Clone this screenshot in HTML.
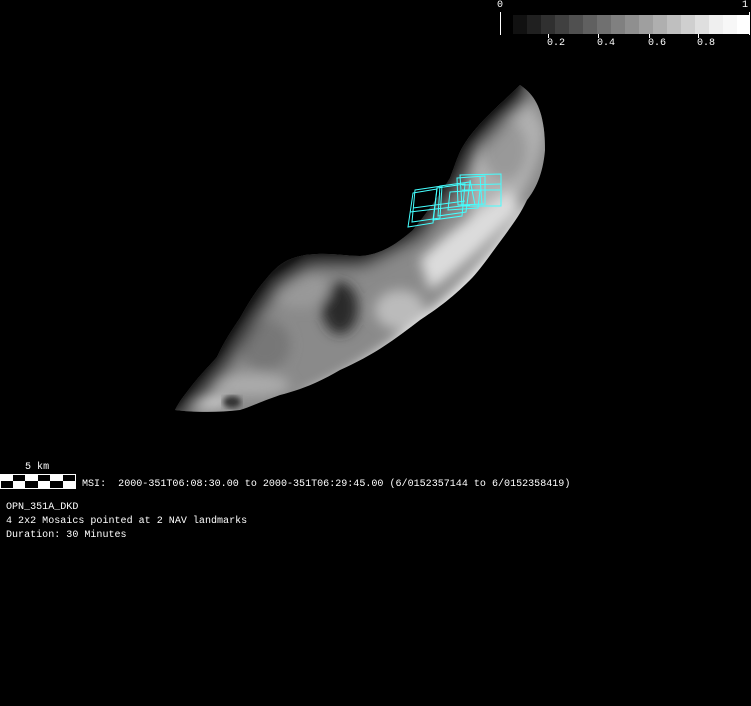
<!DOCTYPE html>
<html><head><meta charset="utf-8"><style>
html,body{margin:0;padding:0;background:#000;}
body{width:751px;height:706px;position:relative;overflow:hidden;font-family:"Liberation Mono","DejaVu Sans Mono",monospace;color:#fff;}
.t{position:absolute;font-size:10.05px;line-height:12px;white-space:pre;}
</style></head><body>
<svg width="751" height="706" style="position:absolute;left:0;top:0">
<defs>
<clipPath id="c"><path id="ast" d="M520,85 C535,95 545,110 545,150 C543,175 535,190 527,200 C520,215 512,225 505,235 C490,255 480,270 470,280 C450,300 435,310 420,320 C400,335 380,352 340,370 C320,382 300,390 280,395 C260,402 250,407 240,410 C215,413 190,412 175,410 C180,400 185,395 190,388 C200,375 210,365 217,357 C225,340 232,330 240,318 C250,300 258,288 267,278 C280,262 290,258 305,255 C330,252 345,256 360,256 C375,255 390,250 413,230 C425,215 440,195 450,178 C455,165 458,155 462,148 C475,125 500,105 520,85 Z"/></clipPath>
<filter id="b"><feGaussianBlur stdDeviation="6"/></filter>
<filter id="b3"><feGaussianBlur stdDeviation="3"/></filter>
<filter id="b8"><feGaussianBlur stdDeviation="9"/></filter>
</defs>
<g clip-path="url(#c)">
<rect x="150" y="60" width="420" height="370" fill="#8a8a8a"/>
<g filter="url(#b)">
<path d="M470,140 C490,120 510,100 525,90 L545,130 C540,170 520,200 500,230 L470,230 Z" fill="#b0b0b0"/>
<path d="M300,395 C380,360 450,300 500,240 L530,205 L545,215 L500,270 C450,320 400,360 320,400 Z" fill="#f0f0f0"/>
<path d="M420,260 C450,230 480,210 510,190 L520,210 C490,240 460,270 430,290 Z" fill="#dcdcdc"/>
<ellipse cx="340" cy="308" rx="18" ry="26" fill="#2a2a2a"/>
<ellipse cx="300" cy="290" rx="30" ry="18" fill="#999"/>
<ellipse cx="265" cy="345" rx="25" ry="25" fill="#777"/>
<ellipse cx="250" cy="385" rx="40" ry="12" fill="#aaa"/>
<ellipse cx="205" cy="402" rx="25" ry="7" fill="#ccc"/>
<ellipse cx="400" cy="310" rx="25" ry="20" fill="#bbb"/>
<ellipse cx="505" cy="150" rx="22" ry="30" fill="#999"/>
</g>
<path filter="url(#b8)" fill="none" stroke="#000" stroke-opacity="0.85" stroke-width="26" d="M165,415 L190,385 L215,355 L240,315 L267,275 L305,250 L360,250 L410,225 L445,178 L460,145 L490,112 L522,82"/>
<path filter="url(#b3)" fill="none" stroke="#000" stroke-opacity="0.6" stroke-width="6" d="M165,415 L190,385 L215,355 L240,315 L267,275 L305,250 L360,250 L410,225 L445,178 L460,145 L490,112 L522,82"/>
<ellipse cx="232" cy="402" rx="9" ry="6" fill="#333" filter="url(#b3)"/>
</g>
<g fill="none" stroke="#4ff" stroke-width="1">
<path d="M413,193 L437,189 L433,223 L408,227 Z"/>
<path d="M415,190 L442,186 L440,218 L412,222 Z"/>
<path d="M437,188 L465,184 L462,216 L433,220 Z"/>
<path d="M440,186 L470,182 L466,212 L438,216 Z"/>
<path d="M413,208 L465,201"/>
<path d="M410,212 L470,205"/>
<path d="M460,175 L501,174 L501,206 L462,206 Z"/>
<path d="M457,178 L485,176 L485,204 L458,205 Z"/>
<path d="M462,185 L501,184"/>
<path d="M462,190 L500,190"/>
<path d="M470,180 L475,205"/>
<path d="M480,176 L482,205"/>
<path d="M450,192 L480,190 L478,208 L448,210 Z"/>
</g>
<g>
<rect x="513" y="15" width="14" height="19" fill="#111"/>
<rect x="527" y="15" width="14" height="19" fill="#202020"/>
<rect x="541" y="15" width="14" height="19" fill="#303030"/>
<rect x="555" y="15" width="14" height="19" fill="#404040"/>
<rect x="569" y="15" width="14" height="19" fill="#505050"/>
<rect x="583" y="15" width="14" height="19" fill="#606060"/>
<rect x="597" y="15" width="14" height="19" fill="#707070"/>
<rect x="611" y="15" width="14" height="19" fill="#808080"/>
<rect x="625" y="15" width="14" height="19" fill="#8f8f8f"/>
<rect x="639" y="15" width="14" height="19" fill="#9f9f9f"/>
<rect x="653" y="15" width="14" height="19" fill="#afafaf"/>
<rect x="667" y="15" width="14" height="19" fill="#bfbfbf"/>
<rect x="681" y="15" width="14" height="19" fill="#cfcfcf"/>
<rect x="695" y="15" width="14" height="19" fill="#dfdfdf"/>
<rect x="709" y="15" width="14" height="19" fill="#efefef"/>
<rect x="723" y="15" width="14" height="19" fill="#f7f7f7"/>
<rect x="737" y="15" width="13" height="19" fill="#fff"/>
<rect x="500" y="12" width="1" height="23" fill="#fff"/>
<rect x="749" y="12" width="1" height="23" fill="#fff"/>
<rect x="548" y="34" width="1" height="4" fill="#fff"/>
<rect x="598" y="34" width="1" height="4" fill="#fff"/>
<rect x="649" y="34" width="1" height="4" fill="#fff"/>
<rect x="698" y="34" width="1" height="4" fill="#fff"/>
</g>
<rect x="0.5" y="474.5" width="75" height="14" fill="#fff" stroke="#fff"/>
<g fill="#000">
<rect x="13" y="475" width="12" height="6"/>
<rect x="38" y="475" width="12" height="6"/>
<rect x="63" y="475" width="12" height="6"/>
<rect x="1" y="481" width="12" height="7"/>
<rect x="25" y="481" width="13" height="7"/>
<rect x="50" y="481" width="13" height="7"/>
</g>
</svg>
<div class="t" style="left:497px;top:0px">0</div>
<div class="t" style="left:742px;top:0px">1</div>
<div class="t" style="left:547px;top:38px">0.2</div>
<div class="t" style="left:597px;top:38px">0.4</div>
<div class="t" style="left:648px;top:38px">0.6</div>
<div class="t" style="left:697px;top:38px">0.8</div>
<div class="t" style="left:25px;top:462px">5 km</div>
<div class="t" style="left:82px;top:479px">MSI:  2000-351T06:08:30.00 to 2000-351T06:29:45.00 (6/0152357144 to 6/0152358419)</div>
<div class="t" style="left:6px;top:502px">OPN_351A_DKD</div>
<div class="t" style="left:6px;top:516px">4 2x2 Mosaics pointed at 2 NAV landmarks</div>
<div class="t" style="left:6px;top:530px">Duration: 30 Minutes</div>
</body></html>
